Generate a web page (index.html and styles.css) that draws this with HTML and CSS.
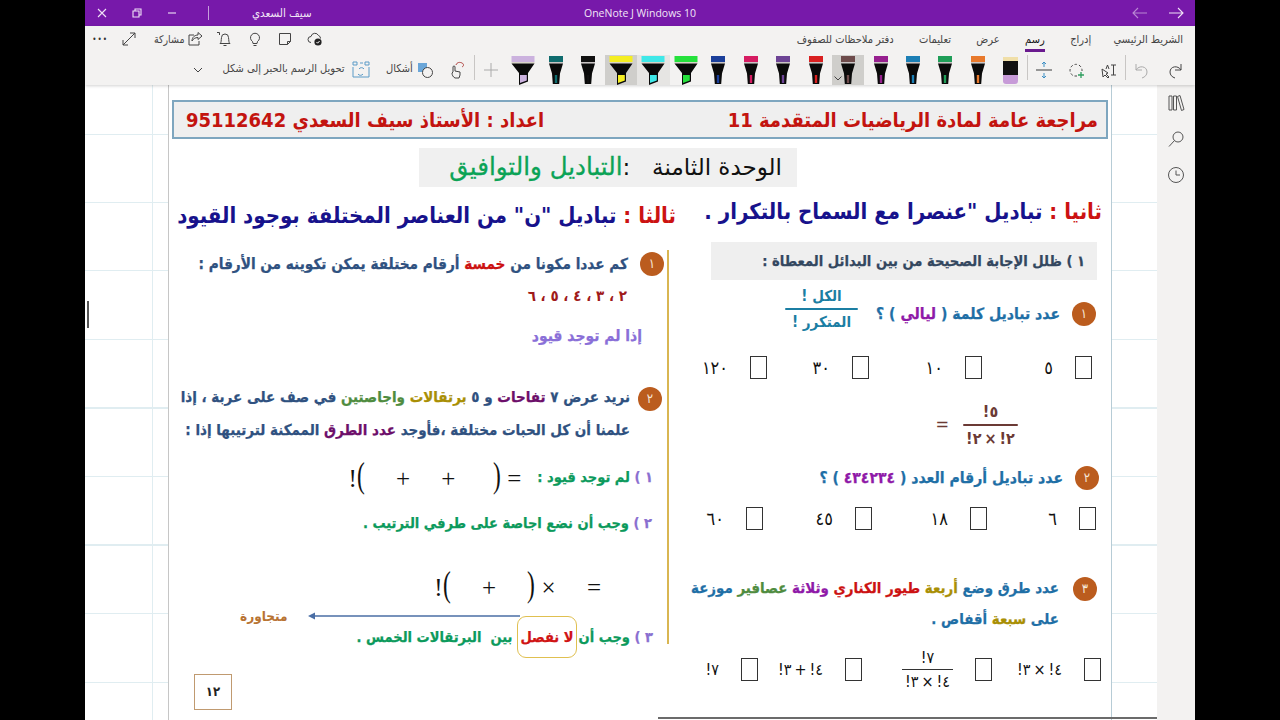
FILE: index.html
```html
<!DOCTYPE html>
<html lang="ar" dir="rtl">
<head>
    <meta charset="utf-8">
    <title>OneNote</title>
    <link rel="stylesheet" href="styles.css">
</head>
<body>
<svg class="defs" width="0" height="0">
    <symbol id="pen" viewBox="0 0 24 29">
        <path d="M5 0h14v6H5z" fill="currentColor"/>
        <path d="M5 6h14v1.500H5z" fill="#c9c4c4"/>
        <path d="M5 7.500h14l-3 10-.8 10.500H8.800L8 17.500z" fill="#0a0a0a"/>
        <path d="M10.800 19h2.400v8h-2.400z" fill="currentColor"/>
    </symbol>
    <symbol id="marker" viewBox="0 0 24 29">
        <path d="M.5 0h23v6H.5z" fill="currentColor"/>
        <path d="M.5 6h23v1.500H.5z" fill="#d8d4c8"/>
        <path d="M.5 7.500h23l-6.500 9.500v8.500L8 29V17z" fill="#0a0a0a"/>
        <path d="M9 19h6.800v5.500L9 27z" fill="currentColor"/>
    </symbol>
</svg>

<div class="app">
    <header class="titlebar">
        <div class="nav">
            <svg class="ico-w" viewBox="0 0 16 16"><path d="M1 8h14M10 3l5 5-5 5"/></svg>
            <svg class="ico-w dim" viewBox="0 0 16 16"><path d="M15 8H1M6 3 1 8l5 5"/></svg>
        </div>
        <div class="apptitle">OneNote J Windows 10</div>
        <div class="winctl">
            <span class="username">سيف السعدي</span>
            <span class="winsep"></span>
            <svg class="ico-w" viewBox="0 0 16 16"><path d="M4 8h8"/></svg>
            <svg class="ico-w" viewBox="0 0 16 16"><path d="M4 6h6v6H4zM6 6V4h6v6h-2"/></svg>
            <svg class="ico-w" viewBox="0 0 16 16"><path d="M4 4l8 8M12 4l-8 8"/></svg>
        </div>
    </header>

    <section class="ribbon">
        <div class="ribbon-top">
            <nav class="tabs">
                <span class="tab-first">الشريط الرئيسي</span>
                <span>إدراج</span>
                <span class="tab-on">رسم</span>
                <span>عرض</span>
                <span>تعليمات</span>
                <span>دفتر ملاحظات للصفوف</span>
            </nav>
            <div class="quick">
                <svg class="ico" viewBox="0 0 16 16"><path d="M4 11.500a3 3 0 0 1 0-6 4 4 0 0 1 7.500-1 3 3 0 0 1 2 3"/><circle cx="11" cy="11" r="3.600" fill="#222" stroke="none"/><path d="M9.500 11l1.100 1.200 2-2.200" stroke="#fff"/></svg>
                <svg class="ico" viewBox="0 0 16 16"><path d="M2.500 2.500h11v8l-3 3h-8zM13.500 10.500h-3v3"/></svg>
                <svg class="ico" viewBox="0 0 16 16"><path d="M5.500 10.500a4.500 4.500 0 1 1 5 0l-.5 2H6zM6.500 14.500h3"/></svg>
                <svg class="ico" viewBox="0 0 16 16"><path d="M3 12.500c1.500-1 1-3 1.500-6a3.500 3.500 0 0 1 7 0c.5 3 0 5 1.500 6zM6.500 14.500h3M0 1.500h2.500V4"/></svg>
                <span class="share"><svg class="ico" viewBox="0 0 16 16"><path d="M7 4H2v10h10v-4M5 10c0-4 3-6 6-6V1.500L15 5l-4 3.500V6.500c-3 0-5 1.500-6 3.500z"/></svg><span>مشاركة</span></span>
                <svg class="ico expand" viewBox="0 0 16 16"><path d="M2 14 14 2M9 2h5v5M2 9v5h5"/></svg>
                <span class="dots">•••</span>
            </div>
        </div>
        <div class="ribbon-tools">
            <span class="tool"><svg class="ico big" viewBox="0 0 18 18"><path d="M15 3v6H9M15 9C12 4 4 5 4 11c0 3 2 5 5 6"/></svg></span>
            <span class="tool"><svg class="ico big faint" viewBox="0 0 18 18"><path d="M3 3v6h6M3 9c3-5 11-4 11 2 0 3-2 5-5 6"/></svg></span>
            <span class="vsep"></span>
            <span class="tool"><svg class="ico big" viewBox="0 0 18 18"><path d="M11 4h5M13.500 4v10M11 14h5M2 8l1 8 2-2 3 3 1-1-3-3 2-1zM6 8l1.500-4L9 8"/></svg></span>
            <span class="tool"><svg class="ico big" viewBox="0 0 18 18"><path class="dash" d="M10 15H7a6 6 0 1 1 8-6v1"/><path class="plus-g" d="M14 11v6M11 14h6"/></svg></span>
            <span class="tool"><svg class="ico big" viewBox="0 0 18 18"><path d="M1 9h16" stroke="#777" stroke-width="1.500"/><path class="ruler" d="M9 1v5M7 3l2-2 2 2M9 17v-5M7 15l2 2 2-2"/></svg></span>
            <span class="vsep"></span>
            <span class="tool"><span class="eraser"></span></span>
            <span class="tool c-orange"><svg class="pen"><use href="#pen"/></svg></span>
            <span class="tool c-green"><svg class="pen"><use href="#pen"/></svg></span>
            <span class="tool c-blue"><svg class="pen"><use href="#pen"/></svg></span>
            <span class="tool c-magenta"><svg class="pen"><use href="#pen"/></svg></span>
            <span class="tool c-brown picked"><svg class="pen"><use href="#pen"/></svg><svg class="pickdown" viewBox="0 0 8 5"><path d="M.5.500 4 4 7.500.500"/></svg></span>
            <span class="tool c-red"><svg class="pen"><use href="#pen"/></svg></span>
            <span class="tool c-violet"><svg class="pen"><use href="#pen"/></svg></span>
            <span class="tool c-pink"><svg class="pen"><use href="#pen"/></svg></span>
            <span class="tool c-navy"><svg class="pen"><use href="#pen"/></svg></span>
            <span class="tool c-lime"><svg class="pen"><use href="#marker"/></svg></span>
            <span class="tool c-cyan soft"><svg class="pen"><use href="#marker"/></svg></span>
            <span class="tool c-yellow picked"><svg class="pen"><use href="#marker"/></svg></span>
            <span class="tool c-black"><svg class="pen"><use href="#pen"/></svg></span>
            <span class="tool c-teal"><svg class="pen"><use href="#pen"/></svg></span>
            <span class="tool c-lilac"><svg class="pen"><use href="#marker"/></svg></span>
            <span class="tool"><svg class="ico big faint" viewBox="0 0 18 18"><path d="M9 2v14M2 9h14"/></svg></span>
            <span class="vsep"></span>
            <span class="tool"><svg class="ico big" viewBox="0 0 18 18"><path d="M7 17c-2-1-3-3-3-5l1-1V6a1 1 0 0 1 2 0v4l5 1v3l-1 3z" /><path d="M8 4c1-3 4-3 6-2s2 3 0 4" stroke="#b0413e"/></svg></span>
            <span class="tool"><svg class="ico big" viewBox="0 0 18 18"><path d="M2 2h9v9H2z" fill="#6aa6d8" stroke="none"/><circle cx="11.500" cy="11.500" r="5" fill="#f3f2f1"/></svg></span>
            <span class="tool-label shapes-label">أشكال</span>
            <span class="tool"><svg class="ico big blue-line" viewBox="0 0 18 18"><path d="M1 1h4v3H1zM13 1h4v3h-4zM1 16V6M17 6v10H1M8 2h3M7 8a3 3 0 0 1 5 0M11 13a3 3 0 0 1-5 0"/></svg></span>
            <span class="tool-label">تحويل الرسم بالحبر إلى شكل</span>
            <svg class="ico chev" viewBox="0 0 10 6"><path d="M1 1l4 4 4-4"/></svg>
        </div>
    </section>

    <div class="workspace">
        <aside class="sidepanel">
            <svg class="ico side" viewBox="0 0 18 18"><path d="M2 2h3v14H2zM6.500 2h3v14h-3zM10.500 2.500l2.500-1 4 14-2.500 1z"/></svg>
            <svg class="ico side" viewBox="0 0 18 18"><circle cx="11" cy="7" r="5"/><path d="M7.500 10.500 2 16.500"/></svg>
            <svg class="ico side" viewBox="0 0 18 18"><circle cx="9" cy="9" r="7.500"/><path d="M9 4.500V9h4"/></svg>
        </aside>

        <main class="canvas">
            <span class="caret"></span>
            <span class="rule-bottom"></span>

            <div class="sheet">
                <div class="banner">
                    <span>مراجعة عامة لمادة الرياضيات المتقدمة 11</span>
                    <span>اعداد : الأستاذ سيف السعدي 95112642</span>
                </div>
                <div class="unit"><span class="unit-a">الوحدة الثامنة&nbsp;&nbsp; :</span><span class="unit-b">التباديل والتوافيق</span></div>

                <div class="columns">
                    <section class="col-right">
                        <h2 class="heading head-r"><span class="red">ثانيا : </span>تباديل "عنصرا مع السماح بالتكرار .</h2>
                        <div class="instruction">١ ) ظلل الإجابة الصحيحة من بين البدائل المعطاة :</div>

                        <div class="ink ink-teal">
                            <span>الكل !</span>
                            <i class="ink-bar"></i>
                            <span>المتكرر !</span>
                        </div>
                        <div class="ink ink-brown" dir="ltr">
                            <b class="ink-eq">=</b>
                            <span>!٥</span>
                            <i class="ink-bar"></i>
                            <span class="tokens"><span>!٢</span><span>×</span><span>!٢</span></span>
                        </div>

                        <div class="q q1"><span class="num">١</span><p class="blue">عدد تباديل كلمة ( <span class="purple">ليالي</span> ) ؟</p></div>
                        <div class="choices ch1">
                            <div class="choice"><i class="box"></i><span>٥</span></div>
                            <div class="choice"><i class="box"></i><span>١٠</span></div>
                            <div class="choice"><i class="box"></i><span>٣٠</span></div>
                            <div class="choice"><i class="box"></i><span>١٢٠</span></div>
                        </div>

                        <div class="q q2"><span class="num">٢</span><p class="blue">عدد تباديل أرقام العدد ( <span class="purple">٤٣٤٢٣٤</span> ) ؟</p></div>
                        <div class="choices ch2">
                            <div class="choice"><i class="box"></i><span>٦</span></div>
                            <div class="choice"><i class="box"></i><span>١٨</span></div>
                            <div class="choice"><i class="box"></i><span>٤٥</span></div>
                            <div class="choice"><i class="box"></i><span>٦٠</span></div>
                        </div>

                        <div class="q q3"><span class="num">٣</span>
                            <div class="blue">
                                <p>عدد طرق وضع <span class="gold">أربعة</span> <span class="red">طيور الكناري</span> <span class="purple">وثلاثة</span> <span class="olive">عصافير</span> موزعة</p>
                                <p>على <span class="gold">سبعة</span> أقفاص .</p>
                            </div>
                        </div>
                        <div class="choices ch3">
                            <div class="choice"><i class="box"></i><span class="tokens fact" dir="ltr"><span>!٣</span><span>×</span><span>!٤</span></span></div>
                            <div class="choice"><i class="box"></i><span class="frac" dir="ltr"><span>!٧</span><span class="tokens frac-low"><span>!٣</span><span>×</span><span>!٤</span></span></span></div>
                            <div class="choice"><i class="box"></i><span class="tokens fact" dir="ltr"><span>!٣</span><span>+</span><span>!٤</span></span></div>
                            <div class="choice"><i class="box"></i><span class="tokens fact" dir="ltr"><span>!٧</span></span></div>
                        </div>
                    </section>

                    <section class="col-left">
                        <h2 class="heading head-l"><span class="red">ثالثا : </span>تباديل "ن" من العناصر المختلفة بوجود القيود</h2>
                        <div class="left-body">
                            <div class="q lq1"><span class="num">١</span><p class="slate">كم عددا مكونا من <span class="red">خمسة</span> أرقام مختلفة يمكن تكوينه من الأرقام :</p></div>
                            <p class="digits">٢ ، ٣ ، ٤ ، ٥ ، ٦</p>
                            <p class="cond">إذا لم توجد قيود</p>

                            <div class="q lq2"><span class="num">٢</span>
                                <div class="slate">
                                    <p>نريد عرض ٧ <span class="plum">تفاحات</span> و ٥ <span class="gold">برتقالات</span> <span class="olive">واجاصتين</span> في صف على عربة ، إذا</p>
                                    <p>علمنا أن كل الحبات مختلفة ،فأوجد <span class="plum">عدد الطرق</span> الممكنة لترتيبها إذا :</p>
                                </div>
                            </div>

                            <div class="case case1"><p class="green"><span class="lav">١ )</span> لم توجد قيود :</p><span class="math m1" dir="ltr">!<span class="par">(</span>     +     +      <span class="par">)</span> =</span></div>
                            <p class="case case2 green"><span class="lav">٢ )</span> وجب أن نضع اجاصة على طرفي الترتيب .</p>
                            <div class="math m2" dir="ltr">!<span class="par">(</span>     +     <span class="par">)</span> ×     =</div>
                            <div class="case case3 green">
                                <span><span class="lav">٣ )</span> وجب أن</span>
                                <span class="boxed">لا نفصل</span>
                                <span>بين&nbsp; البرتقالات الخمس .</span>
                            </div>

                            <div class="adjacent">
                                <svg class="arrow" viewBox="0 0 212 8"><path d="M0 4l7-3.500v7z" fill="#4a6ea5"/><path d="M6 4h206" stroke="#4a6ea5" stroke-width="1.300"/></svg>
                                <span>متجاورة</span>
                            </div>
                        </div>
                        <div class="pageno">١٢</div>
                    </section>
                </div>
            </div>
        </main>
    </div>
</div>
</body>
</html>
```

FILE: styles.css
```css
* { box-sizing: border-box; }

html, body
{
    margin: 0;
    height: 720px;
    overflow: hidden;
    background: #000;
}

body
{
    font-family: "DejaVu Sans Condensed", "DejaVu Sans", sans-serif;
    color: #222;
}

h2, p { margin: 0; }

.defs { position: absolute; }

.app
{
    width: 1110px;
    height: 720px;
    margin: 0 85px;
    display: flex;
    flex-direction: column;
    background: #fff;
}

/* title bar */
.titlebar
{
    height: 26px;
    flex: none;
    background: #7719aa;
    color: #f2e6f7;
    display: grid;
    grid-template-columns: 1fr auto 1fr;
    align-items: center;
    font-size: 11px;
}

.nav { display: flex; gap: 20px; padding-right: 11px; }
.winctl { display: flex; align-items: center; justify-content: flex-start; gap: 19px; padding-left: 9px; direction: rtl; justify-self: end; }
.username { margin-left: 24px; font-size: 11.500px; }
.winsep { width: 1px; height: 14px; background: #c79fdc; margin-left: 9px; }
.apptitle { direction: ltr; font-family: "Open Sans", sans-serif; font-size: 10.500px; }

.ico-w { width: 16px; height: 16px; fill: none; stroke: #f0e2f6; stroke-width: 1.100; }
.ico-w.dim { opacity: .55; }

/* ribbon */
.ribbon
{
    height: 59px;
    flex: none;
    background: #f3f2f1;
    box-shadow: 0 1px 3px rgba(0,0,0,.18);
    position: relative;
    z-index: 2;
}

.ribbon-top
{
    height: 26px;
    display: flex;
    justify-content: space-between;
    align-items: center;
    padding: 0 12px 0 7px;
}

.tabs { display: flex; gap: 25.400px; font-size: 11px; color: #444; }
.tab-first { margin-left: -3px; }
.tab-on { position: relative; color: #111; }
.tab-on::after
{
    content: "";
    position: absolute;
    left: 0;
    right: 0;
    top: 16px;
    height: 3px;
    background: #6a1b8f;
}

.quick { display: flex; align-items: center; gap: 14px; }
.share { display: flex; align-items: center; gap: 2px; font-size: 10.500px; color: #444; }
.expand { margin-right: 3px; }
.dots { font-size: 8px; letter-spacing: 1px; color: #333; margin-right: -1px; width: 16px; }

.ico { width: 16px; height: 16px; flex: none; fill: none; stroke: #444; stroke-width: 1; }
.ico.big { width: 18px; height: 18px; }
.ico.faint { stroke: #aaa; }
.blue-line { stroke: #5b9bc7; }
.dash { stroke-dasharray: 2.500 2; }
.plus-g { stroke: #2f9e5f; stroke-width: 1.300; }
.ruler { stroke: #3d8fc4; }
.chev { width: 10px; height: 6px; margin-right: 20px; align-self: center; }

.ribbon-tools
{
    height: 33px;
    display: flex;
    padding: 3px 4px 0 0;
    overflow: visible;
}

.tool
{
    width: 32.470px;
    height: 30px;
    flex: none;
    display: flex;
    align-items: center;
    justify-content: center;
    position: relative;
}

.tool.picked { background: #cfcecb; }
.tool.soft { background: #e6e5e3; }
.tool-label { font-size: 11px; color: #444; line-height: 28px; }
.shapes-label { margin-left: 9px; margin-right: -4px; }
.vsep { width: 1px; height: 25px; background: #c8c6c4; flex: none; }

.pen { width: 24px; height: 29px; }
.pickdown { position: absolute; width: 8px; height: 5px; left: 2px; bottom: 4px; fill: none; stroke: #444; }

.eraser
{
    display: block;
    width: 15px;
    height: 27px;
    border-radius: 0 0 3px 3px;
    background: linear-gradient(#f0dfa8 0 4px, #111 4px 18px, #c79bd8 18px);
}

.c-orange { color: #e8792c; }
.c-green { color: #1f9e58; }
.c-blue { color: #1c7fb5; }
.c-magenta { color: #97208f; }
.c-brown { color: #6d4b4b; }
.c-red { color: #d92020; }
.c-violet { color: #6d4495; }
.c-pink { color: #d61c62; }
.c-navy { color: #1b3f9a; }
.c-lime { color: #25e13c; }
.c-cyan { color: #3fe8e8; }
.c-yellow { color: #f5ee22; }
.c-black { color: #111; }
.c-teal { color: #0f6c6e; }
.c-lilac { color: #cbb2de; }

/* body of the window */
.workspace
{
    flex: 1;
    display: flex;
    min-height: 0;
}

.sidepanel
{
    width: 38px;
    flex: none;
    background: #f3f2f1;
    display: flex;
    flex-direction: column;
    align-items: center;
    gap: 18px;
    padding-top: 9px;
}

.side { width: 18px; height: 18px; stroke: #555; }

.canvas
{
    flex: 1;
    position: relative;
    padding: 0 45px 0 83px;
    min-width: 0;
    background:
        linear-gradient(90deg, transparent 67px, #e0edf1 67px, #e0edf1 68px, transparent 68px),
        repeating-linear-gradient(180deg, transparent 0 48.500px, #e0edf1 48.500px 49.500px, transparent 49.500px 68.500px);
}

.caret { position: absolute; left: 2px; top: 216px; width: 2px; height: 27px; background: #555; }
.rule-bottom { position: absolute; left: 573px; right: 0; top: 632px; height: 2px; background: #6b6b6b; }

.sheet
{
    width: 944px;
    height: 635px;
    padding-top: 15px;
    background: #fff;
    border-left: 1px solid #c6c6c6;
    border-right: 1px solid #b7ccd6;
}

.banner
{
    height: 39px;
    margin: 0 3px;
    padding: 0 8px 0 12px;
    display: flex;
    justify-content: space-between;
    align-items: center;
    background: #efefef;
    border: 2px solid #7ea6bf;
    color: #c3140f;
    font-size: 20px;
    font-weight: bold;
}

.unit
{
    width: 378px;
    height: 39px;
    margin: 9px 314px 0 0;
    padding-right: 15px;
    background: #f0f0f0;
    font-family: "DejaVu Sans", sans-serif;
    font-size: 23px;
    line-height: 37px;
    white-space: nowrap;
}

.unit-a { color: #111; }
.unit-b { color: #0ba356; font-size: 24.500px; -webkit-text-stroke: .3px currentColor; }

.columns
{
    display: grid;
    grid-template-columns: 442px 500px;
}

.col-right, .col-left { position: relative; }

.heading
{
    height: 28px;
    font-size: 22px;
    font-weight: bold;
    line-height: 28px;
    color: #17128c;
    white-space: nowrap;
}

.head-r { margin: 11px 9px 0 0; }
.head-l { margin: 15px -7px 0 0; }

.red { color: #cc1212; }
.purple { color: #8f1aa8; }
.gold { color: #a98f05; }
.olive { color: #4f8c3f; }
.plum { color: #6d0f6a; }
.blue { color: #1f6fa6; }
.slate { color: #2f5180; }
.green { color: #0c9a5c; }
.lav { color: #8a6fd0; }

.instruction
{
    width: 386px;
    height: 38px;
    margin: 16px 14px 0 0;
    padding-right: 12px;
    background: #efefef;
    color: #33475f;
    font-size: 14.600px;
    font-weight: bold;
    line-height: 38px;
    white-space: nowrap;
    -webkit-text-stroke: .25px currentColor;
}

.q
{
    display: flex;
    align-items: center;
    gap: 12px;
    font-size: 15.200px;
    font-weight: bold;
    white-space: nowrap;
    -webkit-text-stroke: .25px currentColor;
}

.num
{
    width: 24px;
    height: 24px;
    flex: none;
    border-radius: 50%;
    background: #bb5c1e;
    color: #f6e7d8;
    font-size: 13px;
    font-weight: normal;
    line-height: 23px;
    text-align: center;
    -webkit-text-stroke: 0;
}

.q1 { height: 28px; margin: 20px 15px 0 0; font-size: 15.600px; }
.q2 { height: 28px; margin: 85px 12px 0 0; font-size: 15.600px; }
.q3 { margin: 43px 14px 0 0; align-items: flex-start; gap: 14px; font-size: 14.900px; }
.q3 .num { margin-top: 4px; }
.q3 p { line-height: 31px; }

.choices { display: grid; font-size: 18px; letter-spacing: 4px; color: #111; }
.choice { display: flex; align-items: center; gap: 22px; }
.box { width: 17px; height: 23px; flex: none; border: 1.500px solid #333; background: #fff; }

.ch1 { height: 24px; margin: 27px 19px 0 0; grid-template-columns: 110px 113px 102px auto; }
.ch2 { height: 24px; margin: 14px 15px 0 0; grid-template-columns: 109px 115px 109px auto; }
.ch3 { height: 50px; margin: 9px 10px 0 0; grid-template-columns: 109px 130px 104px auto; }

.tokens { display: inline-flex; justify-content: center; gap: 3px; letter-spacing: 0; white-space: nowrap; }
.fact { font-size: 16px; }
.frac { display: flex; flex-direction: column; align-items: center; font-size: 16px; letter-spacing: 0; line-height: 23px; width: 51px; }
.frac-low { border-top: 1px solid #333; width: 100%; }

.ink { position: absolute; display: flex; flex-direction: column; align-items: center; font-weight: bold; }
.ink-bar { display: block; width: 100%; height: 2px; border-radius: 1px; background: currentColor; }
.ink-teal { left: 116px; top: 97px; width: 73px; color: #1b7ea3; font-size: 15px; line-height: 24px; }
.ink-brown { left: 294px; top: 212px; width: 55px; color: #6b3a35; font-size: 16px; line-height: 25px; }
.ink-eq { position: absolute; right: 100%; margin-right: 14px; top: 12px; font-weight: normal; font-size: 18px; }

/* left column */
.left-body
{
    height: 394px;
    border-right: 2.500px solid #d9b652;
    position: relative;
}

.lq1 { height: 28px; margin: 20px 3px 0 0; }
.digits { height: 24px; margin: 6px 40px 0 0; color: #a01a1a; font-size: 15px; font-weight: bold; line-height: 24px; }
.cond { height: 24px; margin: 16px 25px 0 0; color: #8a6fd8; font-size: 15.500px; font-weight: bold; line-height: 24px; -webkit-text-stroke: .25px currentColor; }
.lq2 { margin: 33px 5px 0 0; align-items: flex-start; gap: 8px; font-size: 15px; }
.lq2 .num { margin-top: 6px; }
.lq2 p { line-height: 33px; }

.case { font-size: 14.500px; font-weight: bold; white-space: nowrap; -webkit-text-stroke: .25px currentColor; }
.case1 { height: 30px; margin: 15px 14px 0 0; display: flex; align-items: center; gap: 16px; }
.case2 { height: 28px; margin: 17px 15px 0 0; line-height: 28px; }
.case3 { height: 28px; margin: 18px 14px 0 0; display: flex; align-items: center; gap: 2px; }

.boxed
{
    height: 42px;
    padding: 0 2px;
    margin-left: 3px;
    flex: none;
    color: #d01414;
    line-height: 40px;
    background: transparent;
    border: 1.500px solid #e0c050;
    border-radius: 9px;
}

.math
{
    font-family: "Liberation Serif", serif;
    font-size: 25px;
    font-weight: normal;
    color: #111;
    white-space: pre;
    line-height: 30px;
    -webkit-text-stroke: 0;
}

.par
{
    display: inline-block;
    margin: 0 -2px;
    font-size: 36px;
    line-height: 30px;
    transform: scaleX(.65);
}

.m2 { height: 36px; margin: 32px 66px 0 0; line-height: 36px; width: fit-content; }

.adjacent
{
    position: absolute;
    left: 71px;
    top: 358px;
    display: flex;
    flex-direction: row-reverse;
    align-items: center;
    gap: 20px;
    color: #b87333;
    font-size: 13.500px;
    font-weight: bold;
    direction: ltr;
}

.arrow { width: 212px; height: 8px; order: -1; }

.pageno
{
    width: 38px;
    height: 36px;
    margin: 30px 437px 0 0;
    border: 1.500px solid #c09a70;
    color: #222;
    font-size: 13px;
    font-weight: bold;
    line-height: 33px;
    text-align: center;
}
```
